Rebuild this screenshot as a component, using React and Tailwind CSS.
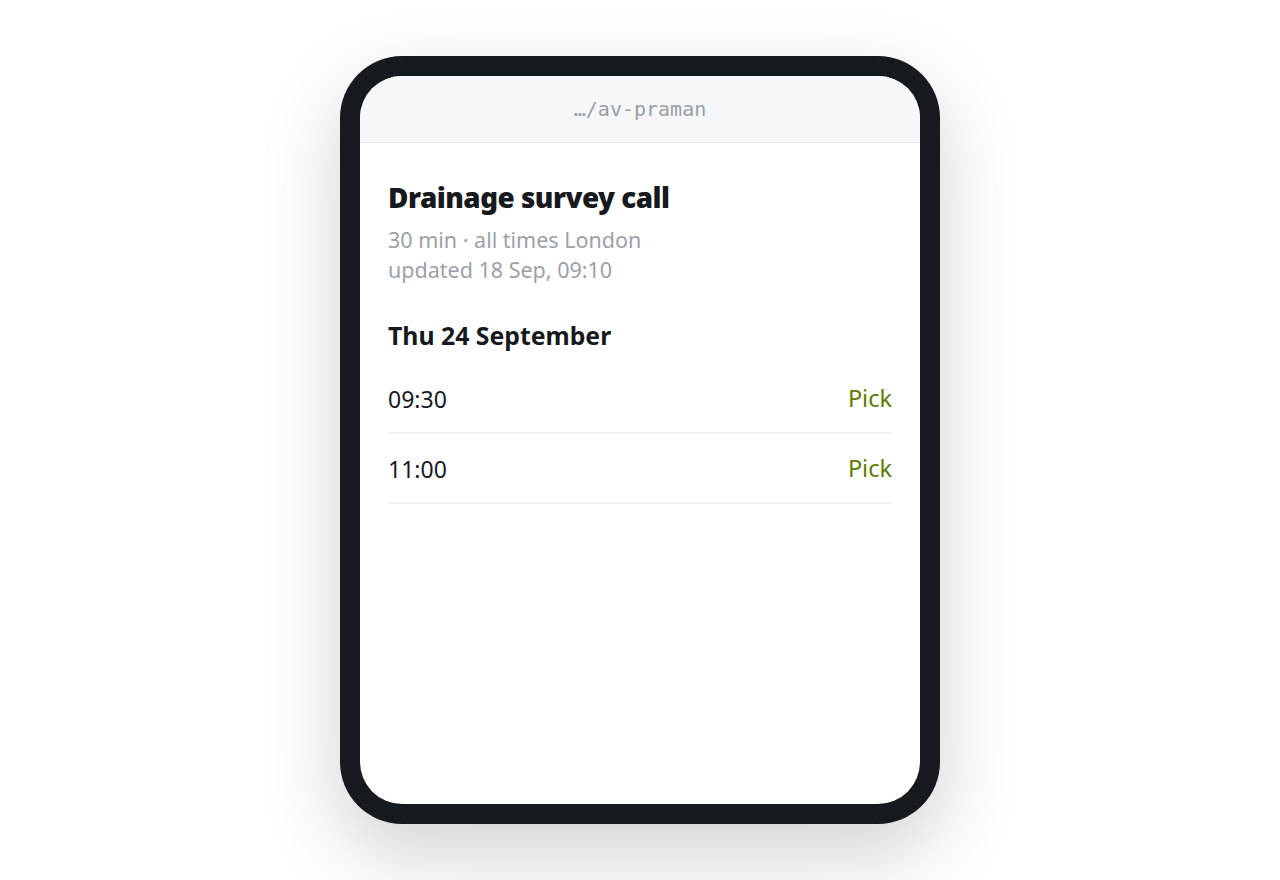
import React from "react";

const slots = ["09:30", "11:00"];

export default function App() {
  return (
    <div className="flex h-[880px] w-full items-center justify-center bg-white font-['Noto_Sans',sans-serif]">
      {/* Device frame */}
      <div className="h-[768px] w-[600px] rounded-[62px] bg-[#16191d] p-[20px] shadow-[0_30px_80px_rgba(0,0,0,0.18)]">
        <div className="flex h-full w-full flex-col overflow-hidden rounded-[42px] bg-white">
          {/* Address bar */}
          <div className="flex h-[67px] shrink-0 items-center justify-center border-b border-[#e3e5e8] bg-[#f6f7f9]">
            <span className="font-['DejaVu_Sans_Mono',monospace] text-[20px] text-[#9a9ea6]">
              …/av-praman
            </span>
          </div>

          {/* Content */}
          <div className="px-[28px] pt-[36px]">
            <h1 className="text-[27.8px] font-black leading-[36px] tracking-[-0.5px] text-[#16191d]">
              Drainage survey call
            </h1>
            <p className="mt-[10px] text-[21.5px] leading-[30px] text-[#9ca0a8]">
              30 min · all times London
            </p>
            <p className="text-[21.5px] leading-[30px] text-[#9ca0a8]">
              updated 18 Sep, 09:10
            </p>

            <h2 className="mt-[34px] text-[24.8px] font-bold leading-[32px] text-[#16191d]">
              Thu 24 September
            </h2>

            <div className="mt-[13px]">
              {slots.map((t) => (
                <div
                  key={t}
                  className="flex h-[70px] items-center justify-between border-b-2 border-[#f0f1f3] pt-[2px]"
                >
                  <span className="text-[23px] text-[#16191d]">{t}</span>
                  <span className="text-[23.5px] text-[#5b7d00]">Pick</span>
                </div>
              ))}
            </div>
          </div>
        </div>
      </div>
    </div>
  );
}
